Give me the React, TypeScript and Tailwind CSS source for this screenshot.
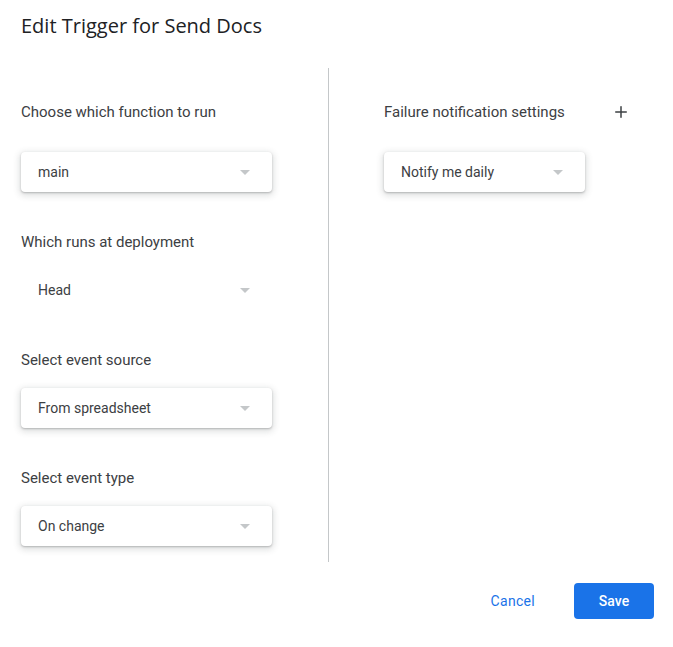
import { Plus } from "lucide-react"

// Small grey caret used by the Material-style selects
function Caret() {
  return (
    <svg width="10" height="5" viewBox="0 0 10 5" className="shrink-0">
      <path d="M0 0 L5 5 L10 0 Z" fill="#c4c7c9" />
    </svg>
  )
}

type SelectProps = {
  value: string
  width: string
  flat?: boolean
}

function Select({ value, width, flat }: SelectProps) {
  return (
    <div
      className={`${width} h-10 flex items-center justify-between pl-[17px] pr-[22px] rounded-[4px] bg-white text-[14px] text-[#3c4043] ${
        flat ? "" : "shadow-[0_1px_2px_rgba(60,64,67,0.3),0_2px_6px_2px_rgba(60,64,67,0.15)]"
      }`}
    >
      <span>{value}</span>
      <Caret />
    </div>
  )
}

function Label({ children }: { children: React.ReactNode }) {
  return <div className="h-5 leading-5 text-[15px] text-[#3c4043]">{children}</div>
}

export default function App() {
  return (
    <div
      className="w-[673px] h-[647px] bg-white"
      style={{ fontFamily: "Roboto, 'Liberation Sans', sans-serif" }}
    >
      <h1
        className="pl-[21px] pt-[13px] h-[68px] text-[20px] leading-[26px] text-[#202124]"
        style={{ fontFamily: "'Open Sans', 'Noto Sans', sans-serif" }}
      >
        Edit Trigger for Send Docs
      </h1>

      <div className="flex h-[494px]">
        {/* left column */}
        <div className="w-[308px] ml-[21px] pt-[34px] border-r border-[#c4c7c9]">
          <Label>Choose which function to run</Label>
          <div className="mt-[30px]">
            <Select value="main" width="w-[251px]" />
          </div>

          <div className="mt-[40px]">
            <Label>Which runs at deployment</Label>
          </div>
          <div className="mt-[18px]">
            <Select value="Head" width="w-[251px]" flat />
          </div>

          <div className="mt-[40px]">
            <Label>Select event source</Label>
          </div>
          <div className="mt-[18px]">
            <Select value="From spreadsheet" width="w-[251px]" />
          </div>

          <div className="mt-[40px]">
            <Label>Select event type</Label>
          </div>
          <div className="mt-[18px]">
            <Select value="On change" width="w-[251px]" />
          </div>
        </div>

        {/* right column */}
        <div className="ml-[55px] pt-[34px]">
          <div className="flex items-center w-[246px] justify-between">
            <Label>Failure notification settings</Label>
            <Plus className="w-[18px] h-[18px] text-[#3c4043]" strokeWidth={2} />
          </div>
          <div className="mt-[30px]">
            <Select value="Notify me daily" width="w-[201px]" />
          </div>
        </div>
      </div>

      <div className="flex justify-end items-center mt-[21px] pr-[19px] gap-[39px]">
        <button className="text-[14px] text-[#1a73e8] tracking-[0.3px]">Cancel</button>
        <button className="w-20 h-9 rounded-[4px] bg-[#1a73e8] text-white text-[14px] font-medium">
          Save
        </button>
      </div>
    </div>
  )
}
